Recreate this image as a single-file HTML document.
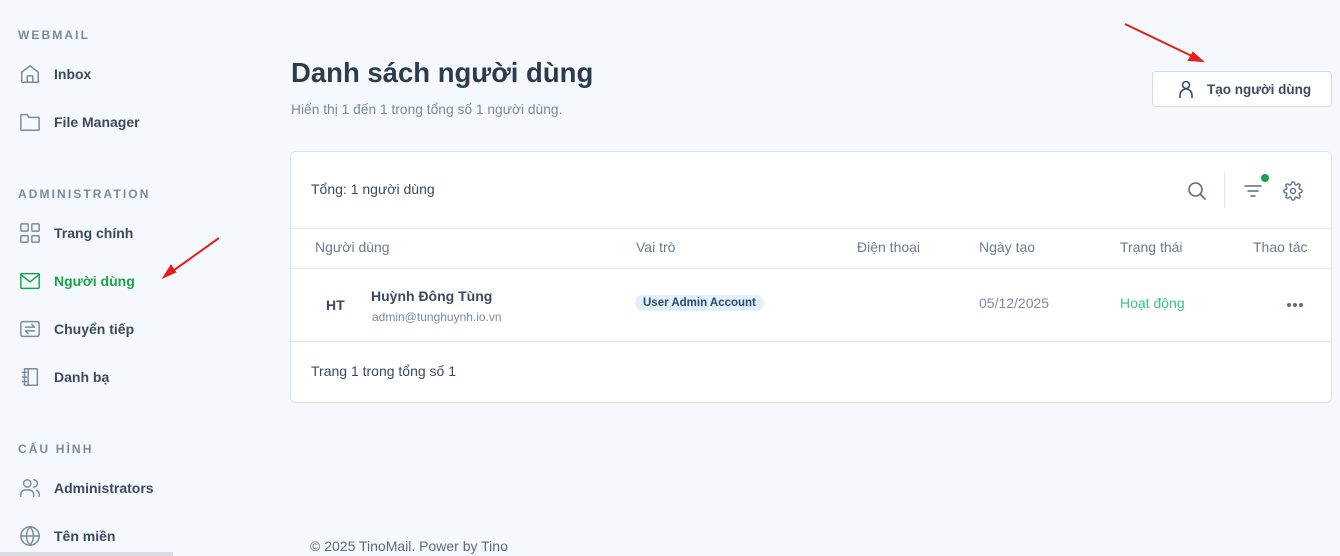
<!DOCTYPE html>
<html><head><meta charset="utf-8"><style>
*{box-sizing:border-box;margin:0;padding:0}
body{width:1340px;height:556px;overflow:hidden;background:#f5f8fc;font-family:"Liberation Sans","Noto Sans CJK SC",sans-serif;color:#344054;position:relative}
.sec{position:absolute;left:18px;font-size:12px;font-weight:bold;letter-spacing:2.1px;color:#7b8aa0}
.item{position:absolute;left:19px;display:flex;align-items:center;font-size:14px;font-weight:bold;color:#3b4a5f}
.item svg{width:22px;height:22px;margin-right:13px;fill:none;stroke:#7b8aa0;stroke-width:1.6;stroke-linecap:round;stroke-linejoin:round}
.item.act{color:#16a34a}.item.act svg{stroke:#16a34a}
h1{position:absolute;left:291px;top:57px;font-size:27.5px;font-weight:bold;color:#2d3b4e}
.sub{position:absolute;left:291px;top:102px;font-size:13.8px;color:#7b8aa0}
.btn{position:absolute;left:1152px;top:71px;width:180px;height:36px;background:#fff;border:1px solid #d5dce5;border-radius:4px;font-size:14px;font-weight:bold;color:#3b4a5f;display:flex;align-items:center;padding-left:24px}
.card{position:absolute;left:290px;top:151px;width:1042px;height:252px;background:#fff;border:1px solid #dde3ea;border-radius:6px}
.hl{position:absolute;left:0;right:0;height:1px;background:#e3e8ee}
.t{position:absolute;font-size:14px;color:#3b4a5f;white-space:nowrap}
.th{position:absolute;top:87px;font-size:14px;color:#6b7a90}
.ic{fill:none;stroke:#5b6b80;stroke-width:1.6;stroke-linecap:round;position:absolute}
.dot{position:absolute;top:151px;width:4px;height:4px;border-radius:50%;background:#5b6b80}
</style></head><body>
<div class="sec" style="top:28px">WEBMAIL</div>
<div class="item" style="top:63px"><svg viewBox="0 0 24 24"><path d="M3 10l9-7 9 7v10a1 1 0 0 1-1 1H4a1 1 0 0 1-1-1z"/><path d="M9 21v-7h6v7"/></svg>Inbox</div>
<div class="item" style="top:111px"><svg viewBox="0 0 24 24"><path d="M2 5a1 1 0 0 1 1-1h6l2 3h10a1 1 0 0 1 1 1v12a1 1 0 0 1-1 1H3a1 1 0 0 1-1-1z"/></svg>File Manager</div>
<div class="sec" style="top:187px">ADMINISTRATION</div>
<div class="item" style="top:222px"><svg viewBox="0 0 24 24"><rect x="2" y="2" width="8" height="8" rx="1"/><rect x="14" y="2" width="8" height="8" rx="1"/><rect x="2" y="15" width="8" height="7" rx="1"/><rect x="14" y="15" width="8" height="7" rx="1"/></svg>Trang chính</div>
<div class="item act" style="top:270px"><svg viewBox="0 0 24 24"><rect x="2" y="4" width="20" height="16" rx="1"/><path d="M2 5l10 8 10-8"/></svg>Người dùng</div>
<div class="item" style="top:318px"><svg viewBox="0 0 24 24"><rect x="2" y="4" width="20" height="16" rx="2"/><path d="M7 10h10l-3-3M17 14H7l3 3"/></svg>Chuyển tiếp</div>
<div class="item" style="top:366px"><svg viewBox="0 0 24 24"><rect x="6" y="3" width="14" height="18" rx="1"/><path d="M10 3v18M4 7h4M4 12h4M4 17h4"/></svg>Danh bạ</div>
<div class="sec" style="top:442px">CẤU HÌNH</div>
<div class="item" style="top:477px"><svg viewBox="0 0 24 24"><circle cx="9" cy="7" r="4"/><path d="M2 21v-2a5 5 0 0 1 5-5h4a5 5 0 0 1 5 5v2M16 3a4 4 0 0 1 0 8M22 21v-2a5 5 0 0 0-3-4.6"/></svg>Administrators</div>
<div class="item" style="top:525px"><svg viewBox="0 0 24 24"><circle cx="12" cy="12" r="10"/><path d="M2 12h20M12 2a15 15 0 0 1 0 20M12 2a15 15 0 0 0 0 20"/></svg>Tên miền</div>
<div style="position:absolute;left:0;top:552px;width:173px;height:4px;background:#d8dce2"></div>

<h1>Danh sách người dùng</h1>
<div class="sub">Hiển thị 1 đến 1 trong tổng số 1 người dùng.</div>
<div class="btn"><svg width="18" height="20" viewBox="0 0 18 20" style="margin-right:12px" fill="none" stroke="#3b4a5f" stroke-width="1.6"><circle cx="9" cy="6" r="3.5"/><path d="M3 19v-3a6 6 0 0 1 12 0v3"/></svg><span style="font-size:13.5px">Tạo người dùng</span></div>

<div class="card">
<div class="t" style="left:20px;top:29px">Tổng: 1 người dùng</div>
<svg class="ic" style="left:896px;top:29px" width="20" height="20" viewBox="0 0 20 20"><circle cx="8.5" cy="8.5" r="6.5"/><path d="M13.5 13.5l4.5 4.5"/></svg>
<div style="position:absolute;left:933px;top:20px;width:1px;height:36px;background:#e3e8ee"></div>
<svg class="ic" style="left:953px;top:31px" width="18" height="16" viewBox="0 0 18 16"><path d="M1 3h16M4 8h10M7 13h4"/></svg>
<div style="position:absolute;left:970px;top:22px;width:8px;height:8px;border-radius:50%;background:#16a34a"></div>
<svg class="ic" style="left:992px;top:29px" width="20" height="20" viewBox="0 0 24 24"><circle cx="12" cy="12" r="3"/><path d="M19.4 15a1.7 1.7 0 0 0 .3 1.8l.1.1a2 2 0 1 1-2.8 2.8l-.1-.1a1.7 1.7 0 0 0-1.8-.3 1.7 1.7 0 0 0-1 1.5V21a2 2 0 1 1-4 0v-.1a1.7 1.7 0 0 0-1.1-1.5 1.7 1.7 0 0 0-1.8.3l-.1.1a2 2 0 1 1-2.8-2.8l.1-.1a1.7 1.7 0 0 0 .3-1.8 1.7 1.7 0 0 0-1.5-1H3a2 2 0 1 1 0-4h.1a1.7 1.7 0 0 0 1.5-1.1 1.7 1.7 0 0 0-.3-1.8l-.1-.1a2 2 0 1 1 2.8-2.8l.1.1a1.700 1.7 0 0 0 1.8.3H9a1.7 1.7 0 0 0 1-1.5V3a2 2 0 1 1 4 0v.1a1.7 1.7 0 0 0 1 1.5 1.7 1.7 0 0 0 1.8-.3l.1-.1a2 2 0 1 1 2.8 2.8l-.1.1a1.7 1.7 0 0 0-.3 1.8V9a1.7 1.7 0 0 0 1.5 1H21a2 2 0 1 1 0 4h-.1a1.7 1.7 0 0 0-1.5 1z"/></svg>
<div class="hl" style="top:76px"></div>
<div class="th" style="left:24px">Người dùng</div>
<div class="th" style="left:345px">Vai trò</div>
<div class="th" style="left:566px">Điện thoại</div>
<div class="th" style="left:688px">Ngày tạo</div>
<div class="th" style="left:829px">Trạng thái</div>
<div class="th" style="left:962px">Thao tác</div>
<div class="hl" style="top:116px"></div>
<div class="t" style="left:35px;top:145px;font-weight:bold">HT</div>
<div class="t" style="left:80px;top:136px;font-weight:bold">Huỳnh Đông Tùng</div>
<div class="t" style="left:81px;top:158px;font-size:12px;color:#7b8aa0">admin@tunghuynh.io.vn</div>
<div class="t" style="left:344px;top:143px;font-size:11.5px;font-weight:bold;color:#2d4a6a;background:#e0f0fd;border-radius:9px;padding:2px 8px">User Admin Account</div>
<div class="t" style="left:688px;top:143px;color:#7b8aa0">05/12/2025</div>
<div class="t" style="left:829px;top:143px;color:#34c77b">Hoạt động</div>
<div class="dot" style="left:996px"></div><div class="dot" style="left:1002px"></div><div class="dot" style="left:1008px"></div>
<div class="hl" style="top:189px"></div>
<div class="t" style="left:20px;top:211px">Trang 1 trong tổng số 1</div>
</div>
<div class="t" style="left:310px;top:538px;color:#5b6b80">© 2025 TinoMail. Power by Tino</div>

<svg style="position:absolute;left:0;top:0" width="1340" height="556"><g stroke="#e5201c" stroke-width="2" fill="#e5201c"><line x1="1125" y1="24" x2="1196" y2="58"/><polygon points="1202,61 1189,60 1193,53"/><line x1="219" y1="238" x2="170" y2="273"/><polygon points="164,277 171,266 175,272"/></g></svg>
</body></html>
